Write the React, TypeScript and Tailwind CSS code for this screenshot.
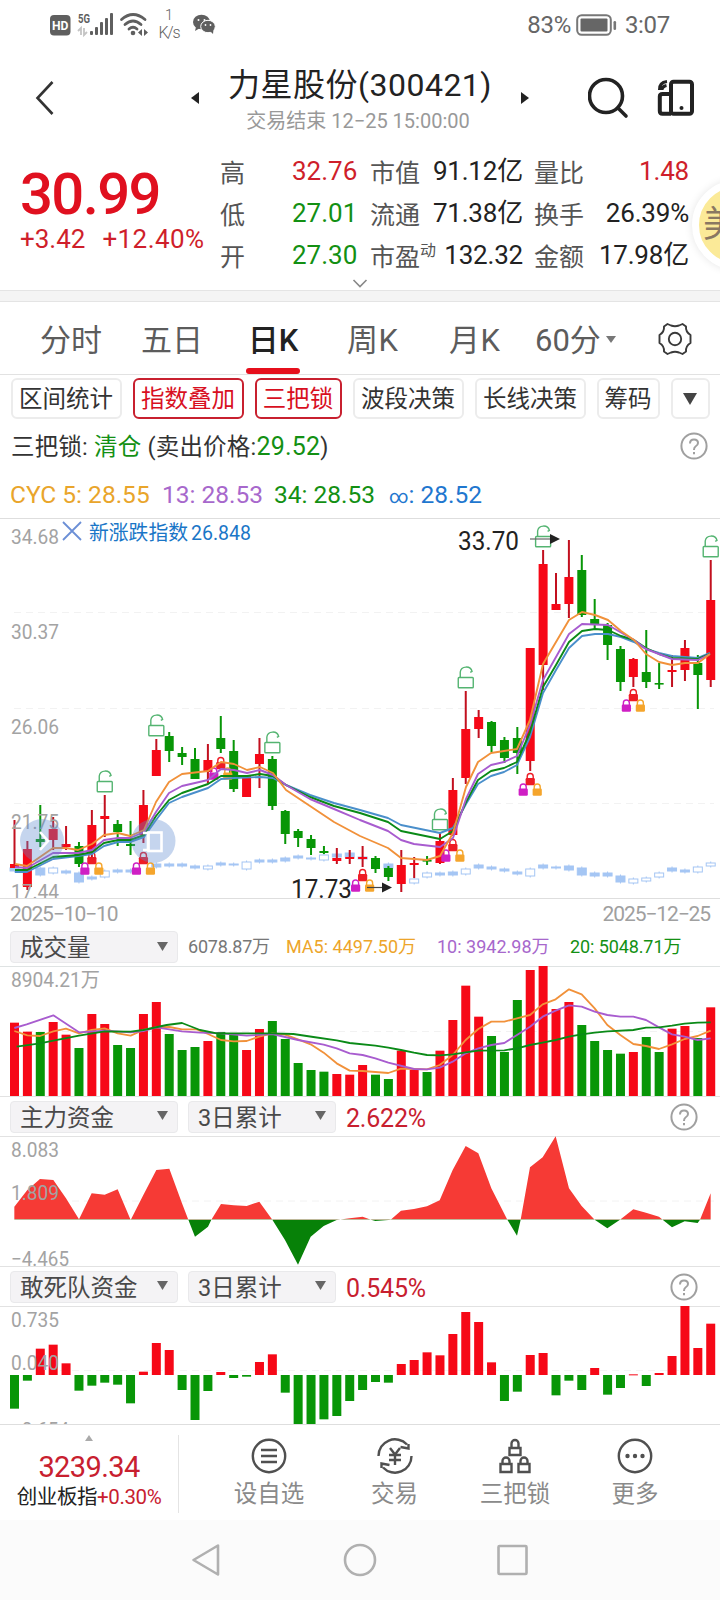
import type { ReactNode } from 'react';

const RED = '#f60817';
const GREEN = '#089607';
const STEP = 12.893;
const cx = (i: number) => 14.5 + STEP * i;

// color, wick high, wick low, body top, body bottom, volume top, retail flow edge
type Day = ['r' | 'g', number, number, number, number, number, number];

const days: Day[] = [
  ['r', 820, 868, 864, 868, 398, 866],
  ['r', 841, 890, 849, 887, 425, 782],
  ['g', 805, 847, 839, 842, 426, 686],
  ['r', 817, 850, 829, 840, 396, 674],
  ['r', 826, 850, 844, 847, 434, 730],
  ['g', 842, 867, 846, 864, 474, 812],
  ['r', 810, 858, 825, 852, 372, 797],
  ['r', 795, 837, 816, 819, 402, 788],
  ['g', 820, 846, 824, 832, 465, 794],
  ['g', 821, 855, 844, 846, 474, 850],
  ['r', 790, 843, 805, 835, 372, 755],
  ['r', 739, 776, 750, 776, 336, 669],
  ['g', 732, 762, 736, 751, 432, 690],
  ['g', 747, 765, 753, 757, 480, 810],
  ['g', 748, 779, 759, 779, 471, 900],
  ['r', 744, 783, 760, 772, 453, 813],
  ['g', 716, 753, 738, 749, 426, 756],
  ['g', 740, 792, 751, 789, 435, 774],
  ['r', 775, 797, 776, 797, 480, 770],
  ['r', 738, 788, 754, 764, 417, 726],
  ['g', 756, 810, 759, 806, 393, 703],
  ['g', 810, 844, 811, 834, 447, 818],
  ['g', 829, 847, 831, 838, 519, 912],
  ['g', 835, 855, 839, 848, 540, 912],
  ['g', 846, 854, 851, 853, 545, 898],
  ['r', 848, 864, 858, 861, 552, 888],
  ['r', 850, 864, 857, 859, 554, 843],
  ['r', 846, 867, 857, 859, 525, 810],
  ['g', 856, 873, 858, 869, 554, 786],
  ['g', 866, 881, 868, 877, 567, 788],
  ['r', 850, 892, 865, 884, 482, 732],
  ['r', 857, 878, 863, 865, 540, 720],
  ['g', 856, 865, 860, 861, 546, 697],
  ['r', 833, 864, 841, 863, 482, 706],
  ['r', 778, 836, 790, 835, 390, 642],
  ['r', 691, 784, 729, 778, 287, 576],
  ['r', 710, 738, 717, 729, 380, 606],
  ['g', 721, 752, 722, 746, 438, 727],
  ['g', 737, 763, 740, 758, 486, 843],
  ['g', 727, 774, 738, 753, 330, 815],
  ['r', 648, 771, 648, 761, 240, 705],
  ['r', 550, 690, 564, 665, 228, 699],
  ['r', 573, 610, 604, 610, 357, 826],
  ['r', 540, 618, 577, 604, 336, 782],
  ['g', 555, 617, 570, 615, 405, 810],
  ['g', 599, 629, 619, 625, 453, 744],
  ['g', 623, 660, 625, 645, 480, 824],
  ['g', 646, 691, 649, 682, 491, 804],
  ['r', 658, 687, 659, 677, 486, 763],
  ['g', 630, 688, 672, 682, 441, 798],
  ['g', 663, 689, 683, 684, 486, 759],
  ['r', 655, 687, 670, 672, 416, 708],
  ['r', 640, 681, 648, 670, 408, 558],
  ['g', 655, 709, 663, 675, 444, 684],
  ['r', 560, 687, 600, 680, 352, 611],
];

// day, top, bottom, hollow
const indexBars: [number, number, number, boolean][] = [
  [0, 868, 871, false], [2, 868, 875, false], [3, 868, 873, true], [4, 871, 873, false], [5, 873, 882, false],
  [6, 877, 879, false], [7, 871, 877, true], [8, 870, 872, false], [9, 870, 872, false], [11, 864, 867, false],
  [12, 864, 866, false], [13, 864, 866, false], [14, 866, 868, false], [15, 866, 869, true], [16, 863, 865, false],
  [17, 864, 865, false], [18, 862, 869, true], [19, 860, 862, false], [20, 860, 862, false], [21, 858, 861, false],
  [22, 856, 858, false], [23, 858, 859, false], [24, 855, 860, true], [25, 854, 857, false], [26, 853, 857, false],
  [27, 857, 859, false], [29, 864, 868, false], [31, 879, 883, true], [32, 873, 877, true], [33, 873, 875, false],
  [34, 872, 875, false], [35, 869, 874, true], [36, 865, 868, false], [37, 867, 869, false], [38, 869, 871, false],
  [39, 872, 874, false], [40, 869, 876, true], [41, 865, 868, false], [42, 867, 868, false], [43, 866, 870, false],
  [44, 868, 875, false], [45, 873, 876, false], [46, 873, 876, false], [47, 876, 882, false], [48, 879, 883, true],
  [49, 878, 881, true], [50, 873, 877, true], [51, 868, 871, false], [52, 870, 872, false], [53, 867, 872, true],
  [54, 863, 866, true],
];

const priceLines = [
  { color: '#4a8fcb', points: '15,872 27,872 53,859 78,856 92,854 104,846 118,842 130,842 144,837 156,820 169,803 182,797 208,788 221,779 234,778 260,777 273,778 286,785 310,795 334,803 360,810 388,818 401,825 440,833 453,828 466,804 478,784 491,776 504,772 517,765 530,737 543,693 556,670 569,648 582,636 595,634 608,634 621,637 634,642 646,649 659,653 672,656 698,658 710,653' },
  { color: '#0a8a17', points: '15,870 27,870 53,857 78,855 92,852 104,843 118,840 130,840 144,835 156,816 169,800 182,793 208,784 221,776 234,776 247,776 260,774 273,776 286,785 310,797 334,806 360,813 388,822 401,831 440,839 453,831 466,802 478,780 491,771 504,768 517,762 530,732 543,687 556,665 569,642 582,631 595,629 608,630 621,636 634,640 646,648 659,654 672,658 698,659 710,654' },
  { color: '#a85ccf', points: '15,867 27,868 53,853 78,853 92,850 104,840 118,838 130,838 144,832 156,812 169,793 182,786 208,780 221,769 234,770 247,773 260,770 273,775 286,785 310,799 334,809 360,820 388,831 401,840 414,844 440,847 453,838 466,799 478,774 491,765 504,762 517,756 530,725 543,680 556,657 569,634 582,624 608,625 634,640 646,649 659,654 672,659 698,660 710,654' },
  { color: '#f1913a', points: '15,864 27,866 53,848 66,848 78,850 92,844 104,835 118,833 130,836 144,830 156,802 169,782 182,774 208,771 221,762 234,764 247,770 260,767 273,773 286,790 310,806 334,822 360,836 388,848 401,858 414,859 427,860 440,856 453,833 466,787 478,762 491,753 504,751 517,749 530,720 543,664 556,642 569,620 582,612 595,615 608,620 621,631 634,640 646,654 659,662 672,665 685,663 698,663 710,654' },
];

const volumeLines = [
  { color: '#f1913a', points: '43,423 82,436 120,438 160,424 198,416 237,430 275,420 314,415 353,430 392,437 430,420 469,412 508,411 546,418 590,418 624,432 663,450 701,454 740,453 778,440 817,430 855,434 894,448 932,463 971,488 1010,520 1049,542 1088,543 1126,546 1165,549 1203,536 1242,537 1281,538 1319,525 1358,495 1397,450 1435,417 1474,395 1513,395 1551,385 1590,375 1628,343 1667,328 1707,298 1745,313 1784,355 1822,405 1861,435 1900,462 1938,468 1977,477 2016,463 2054,447 2093,438 2132,422' },
  { color: '#a85ccf', points: '43,414 80,403 160,376 237,427 314,422 392,427 430,423 469,412 546,424 600,428 663,430 740,437 817,432 894,450 971,464 1010,475 1049,490 1088,495 1126,505 1165,518 1242,537 1281,538 1319,533 1358,515 1397,490 1435,475 1474,465 1513,459 1551,435 1590,410 1628,380 1667,362 1707,346 1745,350 1784,365 1822,375 1861,380 1900,380 1938,390 1977,412 2016,433 2054,440 2093,450 2132,445' },
  { color: '#0a8a17', points: '50,470 120,460 160,452 237,437 314,424 392,425 430,420 500,405 546,399 600,420 650,430 740,430 817,430 880,432 940,441 1010,451 1049,459 1126,467 1165,473 1203,480 1242,488 1281,495 1319,496 1358,493 1397,487 1435,482 1513,481 1551,475 1590,465 1628,458 1667,450 1707,440 1745,433 1784,428 1822,424 1900,420 1938,413 1977,412 2016,407 2054,401 2093,398 2132,397' },
];

const flowArea =
  '43,298.5 43,260 82,210 120,177 160,180 198,235 237,298 275,220 314,224 353,208 392,300 430,225 469,150 508,146 546,250 565,299 585,350 624,320 634,299 663,252 701,256 740,258 778,245 817,299 855,360 894,434 932,350 971,318 1010,300 1049,295 1088,290 1113,299 1126,303 1165,300 1172,299 1203,272 1242,267 1281,259 1319,241 1358,150 1397,78 1435,100 1474,205 1522,299 1551,347 1562,299 1590,142 1628,112 1667,49 1707,205 1745,258 1784,299 1822,325 1860,299 1900,268 1938,278 1977,290 1988,299 2016,322 2054,304 2093,309 2100,299 2132,220 2132,298.5';

const fill = (c: Day[0]) => (c === 'r' ? RED : GREEN);

type LabelProps = { x: number; y: number; w: number; size?: number; color?: string; children: string };

function Label({ x, y, w, size = 20.5, color = '#a3a3a3', children }: LabelProps) {
  return (
    <text x={x} y={y} fontSize={size} fill={color} textLength={w} lengthAdjust="spacingAndGlyphs">
      {children}
    </text>
  );
}

function Padlock({ x, y, color }: { x: number; y: number; color: string }) {
  return (
    <g>
      <path d={`M${x - 3} ${y + 6}V${y + 3.5}a3 3 0 0 1 6 0V${y + 6}`} fill="none" stroke={color} strokeWidth="1.4" />
      <rect x={x - 4.6} y={y + 5} width="9.2" height="7.2" rx="1.2" fill={color} />
    </g>
  );
}

function LockTrio({ x, y }: { x: number; y: number }) {
  return (
    <g>
      <Padlock x={x} y={y} color="#ee1c25" />
      <Padlock x={x - 7} y={y + 10.5} color="#cf1fc4" />
      <Padlock x={x + 7} y={y + 10.5} color="#f5a52c" />
    </g>
  );
}

function OpenLock({ x, y }: { x: number; y: number }) {
  return (
    <g fill="none" stroke="#54b471" strokeWidth="1.4">
      <path d={`M${x - 5.5} ${y + 11.5}V${y + 6}a6 5.6 0 0 1 11.8 -0.6l-1.8 1`} />
      <rect x={x - 7.5} y={y + 11.5} width="15" height="10.3" rx="0.8" />
    </g>
  );
}

function PriceChart() {
  return (
    <svg viewBox="0 518 720 380" className="block h-[380px] w-[720px]">
      <g stroke="#f2f2f2" strokeDasharray="7 5">
        <path d="M14 612.5H714" />
        <path d="M14 708.5H714" />
        <path d="M14 803.5H714" />
      </g>
      <g fill="#a5c6f4" stroke="#a5c6f4">
        {indexBars.map(([i, top, bottom, hollow]) => (
          <g key={i}>
            <path d={`M${cx(i)} ${top - 1.5}V${bottom + 1.5}`} />
            <rect x={cx(i) - 4.5} y={top} width="9" height={bottom - top} fill={hollow ? '#fff' : '#a5c6f4'} />
          </g>
        ))}
      </g>
      {days.map(([c, hi, lo, top, bottom], i) => (
        <g key={i} fill={fill(c)}>
          <rect x={cx(i) - 1} y={hi} width="2" height={lo - hi} fill={c === 'r' ? '#c2101f' : GREEN} />
          <rect x={cx(i) - 4.5} y={top} width="9" height={Math.max(bottom - top, 1.6)} />
        </g>
      ))}
      {[[6, 852], [10, 852], [16, 757], [27, 869], [34, 839], [40, 773], [48, 689]].map(([i, y]) => (
        <LockTrio key={i} x={cx(i)} y={y} />
      ))}
      {[[7, 770], [11, 714], [20, 731], [33, 808], [35, 666], [41, 525], [54, 535]].map(([i, y]) => (
        <OpenLock key={i} x={cx(i)} y={y} />
      ))}
      {priceLines.map((l) => (
        <polyline key={l.color} points={l.points} fill="none" stroke={l.color} strokeWidth="1.9" strokeLinejoin="round" />
      ))}
      <Label x={11} y={544} w={48}>34.68</Label>
      <Label x={11} y={639} w={48}>30.37</Label>
      <Label x={11} y={734} w={48}>26.06</Label>
      <Label x={11} y={829} w={48}>21.75</Label>
      <Label x={11} y={899} w={48}>17.44</Label>
      <g fill="#5f8bd0" fillOpacity="0.36">
        <circle cx="42" cy="841" r="22" />
        <circle cx="153.500" cy="841" r="22" />
      </g>
      <g fill="none" stroke="#fff" strokeWidth="2.600">
        <path d="M40 832L48 841L40 850" />
        <path d="M143 833H148V850H143" />
        <rect x="148.500" y="832.5" width="13" height="18.5" />
      </g>
      <path d="M63 522L81 540M81 522L63 540" stroke="#6b8fd6" strokeWidth="1.8" />
      <Label x={89} y={539.5} w={99} size={20} color="#1a76c7">新涨跌指数</Label>
      <Label x={191} y={540} w={60} size={20} color="#1a76c7">26.848</Label>
      <Label x={458} y={550} w={61} size={25.5} color="#222">33.70</Label>
      <path d="M530 539H552" stroke="#666" strokeWidth="1.2" />
      <path d="M550 534L560 539L550 544Z" fill="#222" />
      <Label x={291} y={898} w={61} size={25.5} color="#222">17.73</Label>
      <path d="M367 887.5H384" stroke="#444" strokeWidth="1.2" />
      <path d="M382 882.5L392 887.5L382 892.5Z" fill="#222" />
    </svg>
  );
}

function VolumeChart() {
  return (
    <svg viewBox="0 966 720 130" className="block h-[130px] w-[720px]">
      <path d="M14 1031.5H714" stroke="#f2f2f2" strokeDasharray="7 5" />
      {days.map(([c, , , , , v], i) => (
        <rect key={i} x={cx(i) - 4.5} y={890 + v / 3} width="9" height={206 - v / 3} fill={fill(c)} />
      ))}
      <g transform="translate(0 890) scale(0.33333)">
        {volumeLines.map((l) => (
          <polyline key={l.color} points={l.points} fill="none" stroke={l.color} strokeWidth="5.500" strokeLinejoin="round" />
        ))}
      </g>
      <Label x={11} y={987} w={89}>8904.21万</Label>
    </svg>
  );
}

function MainFlowChart() {
  return (
    <svg viewBox="0 1136 720 130" className="block h-[130px] w-[720px]">
      <defs>
        <clipPath id="above">
          <rect x="0" y="0" width="2160" height="298.5" />
        </clipPath>
        <clipPath id="below">
          <rect x="0" y="298.5" width="2160" height="200" />
        </clipPath>
      </defs>
      <path d="M60 1201H714" stroke="#f2f2f2" strokeDasharray="7 5" />
      <g transform="translate(0 1120) scale(0.33333)">
        <polygon points={flowArea} fill="#f63a35" clipPath="url(#above)" />
        <polygon points={flowArea} fill="#078108" clipPath="url(#below)" />
      </g>
      <Label x={11} y={1157} w={48}>8.083</Label>
      <Label x={11} y={1200} w={48}>1.809</Label>
      <Label x={11} y={1266} w={58}>−4.465</Label>
    </svg>
  );
}

function RetailFlowChart() {
  return (
    <svg viewBox="0 1306 720 118" className="block h-[118px] w-[720px]">
      <path d="M60 1370.5H714" stroke="#f4f4f4" strokeDasharray="7 5" />
      {days.map((d, i) => {
        const v = d[6];
        const y = Math.min(v, 765) / 3 + 1120;
        return (
          <rect
            key={i}
            x={cx(i) - 4.5}
            y={y}
            width="9"
            height={Math.max(Math.abs(v - 765) / 3, 1)}
            fill={v < 765 ? RED : GREEN}
          />
        );
      })}
      <Label x={11} y={1326.5} w={48}>0.735</Label>
      <Label x={11} y={1369.5} w={48}>0.040</Label>
      <Label x={11} y={1437} w={58}>−0.654</Label>
    </svg>
  );
}

function StatusBar() {
  return (
    <div className="flex h-[50px] items-center justify-between pr-[50px] pl-[49px] text-[#666]">
      <svg viewBox="49 0 170 50" className="h-[50px] w-[170px]" fill="#5f5f5f">
        <rect x="50" y="15" width="20.5" height="20.5" rx="4" />
        <text x="52" y="30" fontSize="13" fontWeight="700" fill="#fff" textLength="16.5" lengthAdjust="spacingAndGlyphs">HD</text>
        <text x="78" y="23" fontSize="13" fontWeight="700" textLength="12" lengthAdjust="spacingAndGlyphs">5G</text>
        <path d="M81 35V28L78 31M84 28V35L87 32" fill="none" stroke="#c4c4c4" strokeWidth="1.8" />
        <rect x="90" y="31" width="3" height="4" rx="1" />
        <rect x="95" y="27" width="3" height="8" rx="1" />
        <rect x="100" y="22" width="3" height="13" rx="1" />
        <rect x="105" y="18" width="3" height="17" rx="1" />
        <rect x="110" y="13" width="3" height="22" rx="1" />
        <g fill="none" stroke="#5f5f5f" strokeWidth="2.8" strokeLinecap="round">
          <path d="M121.5 19.5Q133 9.500 145 19.500" />
          <path d="M125 24.500Q133 17.500 141 24.500" />
          <path d="M129 29Q133 25.500 137 29" />
        </g>
        <circle cx="133" cy="33" r="2.3" />
        <path d="M138 32.500L142 29V36ZM148 32.500L144 29V36Z" />
        <text x="165" y="20" fontSize="14.500" fontWeight="300">1</text>
        <text x="158.500" y="38" fontSize="16" fontWeight="300" textLength="22">K/s</text>
        <ellipse cx="201.500" cy="22" rx="8.500" ry="7.300" />
        <path d="M196 27L195 31L200 28Z" />
        <ellipse cx="208" cy="26.500" rx="7.300" ry="6.200" stroke="#fff" />
        <path d="M210 31L213 34L213.500 29Z" />
        <g fill="#fff">
          <circle cx="198.500" cy="20" r="1" />
          <circle cx="204.500" cy="20" r="1" />
          <circle cx="205.500" cy="25" r="0.9" />
          <circle cx="210.500" cy="25" r="0.9" />
        </g>
      </svg>
      <div className="flex items-center text-[24px] leading-none">
        <span className="tracking-[-0.300px]">83%</span>
        <svg viewBox="0 0 42 22" className="ml-[5px] h-[22px] w-[42px]">
          <rect x="1.200" y="1.200" width="33.600" height="19.600" rx="4.500" fill="none" stroke="#777" strokeWidth="2" />
          <rect x="4.500" y="4.500" width="27" height="13" rx="1" fill="#666" />
          <rect x="37.500" y="7" width="2.600" height="9" rx="1.300" fill="#777" />
        </svg>
        <span className="ml-[7px] tracking-[-0.3px]">3:07</span>
      </div>
    </div>
  );
}

function Header() {
  return (
    <div className="flex h-[96px] items-start text-[#222]">
      <svg viewBox="0 0 20 36" className="mt-[30px] ml-[35px] h-[36px] w-[20px]" fill="none" stroke="#333" strokeWidth="2.600">
        <path d="M17.500 2L2.500 18L17.500 34" />
      </svg>
      <svg viewBox="0 0 8 12" className="mt-[42px] ml-[136px] h-[12px] w-[8px]"><path d="M8 0V12L0 6Z" fill="#222" /></svg>
      <div className="mx-[10px] flex w-[302px] flex-col items-center">
        <div className="mt-[15px] h-[40px] text-[32px] leading-[40px] tracking-[0.500px] whitespace-nowrap">力星股份(300421)</div>
        <div className="mt-[4px] mr-[4px] h-[24px] text-[20px] leading-[24px] whitespace-nowrap text-[#999]">交易结束 12−25 15:00:00</div>
      </div>
      <svg viewBox="0 0 8 12" className="mt-[42px] h-[12px] w-[8px]"><path d="M0 0V12L8 6Z" fill="#222" /></svg>
      <svg viewBox="0 0 42 42" className="mt-[27px] ml-[59px] h-[42px] w-[42px]" fill="none" stroke="#222" strokeWidth="3.600" strokeLinecap="round">
        <circle cx="18" cy="19" r="16.500" />
        <path d="M30 31L38 39" />
      </svg>
      <svg viewBox="0 0 38 38" className="mt-[29px] ml-[27px] h-[38px] w-[38px]" fill="none" stroke="#222" strokeWidth="4" strokeLinejoin="round">
        <rect x="14" y="2.800" width="21" height="32" rx="2.500" />
        <path d="M14 15H5.500Q2.800 15 2.800 17.500V32Q2.800 34.800 5.500 34.800H14" />
        <path d="M2.500 11Q2 3.500 10 2.500M5 11Q5 7.500 9.500 6.500" strokeWidth="3" />
        <circle cx="24.500" cy="29" r="2" fill="#222" stroke="none" />
      </svg>
    </div>
  );
}

const quotes = [
  { a: '高', av: '32.76', up: true, b: '市值', bv: '91.12亿', c: '量比', cv: '1.48', cColor: 'text-[#cf1f2b]' },
  { a: '低', av: '27.01', up: false, b: '流通', bv: '71.38亿', c: '换手', cv: '26.39%', cColor: 'text-[#222]' },
  { a: '开', av: '27.30', up: false, b: '市盈', bv: '132.32', c: '金额', cv: '17.98亿', cColor: 'text-[#222]' },
];

function Quote() {
  return (
    <div className="flex h-[144px] pl-[20px]">
      <div className="w-[200px] text-[#e0101f]">
        <div className="mt-[19px] h-[58px] text-[58px] leading-[58px] font-medium tracking-[-1.600px]">30.99</div>
        <div className="mt-[1px] flex h-[30px] gap-[17px] text-[26px] leading-[30px] whitespace-nowrap text-[#cf1f2b]">
          <span>+3.42</span>
          <span className="tracking-[0.400px]">+12.40%</span>
        </div>
      </div>
      <div className="mt-[4px] flex w-[469px] flex-col items-stretch">
        {quotes.map((q) => (
          <div key={q.a} className="flex h-[42px] items-center text-[25px] leading-none whitespace-nowrap text-[#555]">
            <span className="w-[72px] pt-[4px]">{q.a}</span>
            <span className={`w-[78px] text-[26px] ${q.up ? 'text-[#cf1f2b]' : 'text-[#139013]'}`}>{q.av}</span>
            <span className="flex h-[29px] w-[61px] shrink-0 pt-[4px]">
              {q.b}
              {q.b === '市盈' && <sup className="-top-[2px] text-[16px] leading-none">动</sup>}
            </span>
            <span className="w-[92px] shrink-0 text-right text-[26px] tracking-[-0.2px] text-[#222]">{q.bv}</span>
            <span className="ml-[11px] w-[50px] pt-[4px]">{q.c}</span>
            <span className={`flex-1 text-right text-[26px] tracking-[-0.2px] ${q.cColor}`}>{q.cv}</span>
          </div>
        ))}
        <svg viewBox="0 0 16 9" className="mt-[3px] ml-[132px] h-[9px] w-[16px]" fill="none" stroke="#888" strokeWidth="1.600">
          <path d="M1.500 1L8 7.500L14.500 1" />
        </svg>
      </div>
    </div>
  );
}

function Tabs() {
  return (
    <div className="flex h-[73px] border-b border-[#e2e2e2] text-[31px] leading-[77px] whitespace-nowrap text-[#5c5c5c]">
      <span className="ml-[40px] w-[101px]">分时</span>
      <span className="w-[105px]">五日</span>
      <div className="flex w-[54px] flex-col items-center text-[#222]">
        <span className="h-[66px] font-medium">日K</span>
        <span className="h-[6px] w-[54px] rounded-[3px] bg-[#e60f1c]" />
      </div>
      <span className="ml-[47px] w-[102px] tracking-[0.500px]">周K</span>
      <span className="w-[86px] tracking-[0.500px]">月K</span>
      <span>60分</span>
      <svg viewBox="0 0 10 7" className="mt-[34px] ml-[5px] h-[7px] w-[10px]"><path d="M0 0H10L5 7Z" fill="#777" /></svg>
      <svg viewBox="-17 -17 34 34" className="mt-[20px] ml-auto mr-[28px] h-[34px] w-[34px]" fill="none" stroke="#3a3a3a" strokeWidth="1.900" strokeLinejoin="round">
        <path d="M-7.500 -15L-4 -13.500Q0 -12 4 -13.500L7.500 -15L11 -12.500Q10.500 -7 15.500 -4V4Q10.500 7 11 12.500L7.500 15L4 13.500Q0 12 -4 13.500L-7.500 15L-11 12.500Q-10.500 7 -15.500 4V-4Q-10.500 -7 -11 -12.500Z" />
        <circle r="6.200" />
      </svg>
    </div>
  );
}

const chips = [
  { text: '区间统计', width: 'w-[111px]', active: false },
  { text: '指数叠加', width: 'w-[111px]', active: true },
  { text: '三把锁', width: 'w-[87px]', active: true },
  { text: '波段决策', width: 'w-[111px]', active: false },
  { text: '长线决策', width: 'w-[111px]', active: false },
  { text: '筹码', width: 'w-[63px]', active: false },
];

function Chips() {
  return (
    <div className="flex h-[46px] items-start gap-[11px] pt-[3px] pl-[10.500px] text-[23.500px] whitespace-nowrap">
      {chips.map(({ text, width, active }) => (
        <span
          key={text}
          className={`${width} flex h-[41px] shrink-0 items-center justify-center rounded-[6px] pt-[3px] leading-none ${
            active ? 'border-2 border-[#c8202f] text-[#d8101f]' : 'border-2 border-[#ececec] text-[#333]'
          }`}
        >
          {text}
        </span>
      ))}
      <span className="flex h-[41px] w-[39px] shrink-0 items-center justify-center rounded-[6px] border-2 border-[#ececec]">
        <svg viewBox="0 0 14 12" className="h-[12px] w-[14px]"><path d="M0 0H14L7 12Z" fill="#444" /></svg>
      </span>
    </div>
  );
}

function Help({ className = '' }: { className?: string }) {
  return (
    <svg viewBox="0 0 28 28" className={`h-[28px] w-[28px] ${className}`} fill="none" stroke="#a0a0a0" strokeWidth="2">
      <circle cx="14" cy="14" r="12.600" />
      <path d="M10 11.500Q10 7.500 14 7.500Q18 7.500 18 11Q18 13 15.500 14.500Q14 15.500 14 18" />
      <path d="M14 20V22.200" />
    </svg>
  );
}

function Picker({ text, className }: { text: string; className: string }) {
  return (
    <div className={`flex h-[32px] items-center justify-between rounded-[4px] border border-[#e9e9eb] bg-[#f4f3f5] pl-[9px] text-[23.500px] leading-none whitespace-nowrap text-[#4a4a4a] ${className}`}>
      <span className="pt-[4px]">{text}</span>
      <svg viewBox="0 0 11 9" className="mb-[2px] h-[9px] w-[11px]"><path d="M0 0H11L5.500 9Z" fill="#666" /></svg>
    </div>
  );
}

function FlowHeader({ name, value }: { name: string; value: string }) {
  return (
    <div className="-mb-px flex h-[41px] items-center border-t border-b border-[#e2e2e2] pl-[10px]">
      <Picker text={name} className="w-[168px] pr-[9px]" />
      <Picker text="3日累计" className="ml-[10px] w-[148px] pr-[9px]" />
      <span className="ml-[10px] pt-[3px] text-[25px] leading-none tracking-[-0.2px] text-[#c8202f]">{value}</span>
      <Help className="mr-[22px] ml-auto" />
    </div>
  );
}

function Action({ label, className, children }: { label: string; className: string; children: ReactNode }) {
  return (
    <div className={`flex flex-col items-center pt-[11px] ${className}`}>
      <svg viewBox="-20 -20 40 40" className="h-[40px] w-[40px]" fill="none" stroke="#505050" strokeWidth="2.400">
        {children}
      </svg>
      <span className="mt-[4px] text-[23.500px] leading-[28px] whitespace-nowrap text-[#8a8a8a]">{label}</span>
    </div>
  );
}

function BottomBar() {
  return (
    <div className="flex h-[96px] border-t border-[#dedede]">
      <div className="mt-[10px] flex h-[78px] w-[179px] flex-col items-center border-r border-[#e4e4e4] whitespace-nowrap">
        <svg viewBox="0 0 8 6" className="h-[6px] w-[8px]"><path d="M0 6H8L4 0Z" fill="#aaa" /></svg>
        <span className="mt-[9px] h-[34px] text-[29px] leading-[34px] tracking-[-0.6px] text-[#c8202f]">3239.34</span>
        <span className="h-[26px] text-[20.500px] leading-[26px] tracking-[-0.400px] text-[#222]">
          创业板指<span className="text-[#c8202f]">+0.30%</span>
        </span>
      </div>
      <Action label="设自选" className="ml-[50px] w-[80px]">
        <circle r="16.200" />
        <path d="M-8 -6H8M-8 0H8M-8 6H8" />
      </Action>
      <Action label="交易" className="ml-[45.500px] w-[80px]">
        <path d="M-16.500 0A16.500 16.500 0 0 1 12 -11.500M5.500 -9L13.500 -7.500L13.500 -12" />
        <path d="M16.500 0A16.500 16.500 0 0 1 -12 11.500M-5.500 9L-13.500 7.500L-13.500 12" />
        <path d="M-5 -8L0 -1.500L5 -8M0 -1.500V9M-6 -1H6M-6 4H6" />
      </Action>
      <Action label="三把锁" className="ml-[40.500px] w-[80px]">
        <path d="M-5.500 -8H5.500V-1H-5.500ZM-3.500 -8V-12.500A3.500 3.500 0 0 1 3.500 -12.500V-8" />
        <path d="M-14.500 8H-3.500V16H-14.500ZM-12.500 8V5A3.500 3.500 0 0 1 -5.500 5V8" />
        <path d="M3.500 8H14.500V16H3.500ZM5.500 8V5A3.500 3.500 0 0 1 12.500 5V8" />
      </Action>
      <Action label="更多" className="ml-[40px] w-[80px]">
        <circle r="16.200" />
        <g fill="#505050" stroke="none">
          <circle cx="-7.500" r="2.200" />
          <circle r="2.200" />
          <circle cx="7.500" r="2.200" />
        </g>
      </Action>
    </div>
  );
}

function NavBar() {
  return (
    <div className="flex h-[80px] items-center bg-[#fbfbfb]">
      <svg viewBox="0 0 340 34" className="ml-[190px] h-[34px] w-[340px]" fill="none" stroke="#b0b0b0" strokeWidth="2.600" strokeLinejoin="round">
        <path d="M28 2.500V31.500L3.500 17Z" />
        <circle cx="170" cy="17" r="15" />
        <rect x="308.500" y="3" width="28" height="28" rx="1" />
      </svg>
    </div>
  );
}

export default function App() {
  return (
    <div className="relative h-[1600px] w-[720px] overflow-hidden bg-white font-['Roboto','Noto_Sans_CJK_SC',sans-serif]">
      <StatusBar />
      <Header />
      <Quote />
      <div className="h-[12px] border-t border-b border-[#e4e4e4] bg-[#f4f4f4]" />
      <Tabs />
      <Chips />
      <div className="flex h-[51px] items-center justify-between pr-[12px] pb-[2px] pl-[11px] text-[23.500px] leading-none text-[#333]">
        <span className="pt-[3px] tracking-[0.200px]">
          三把锁: <span className="text-[#139013]">清仓</span> (卖出价格:<span className="text-[25px] text-[#139013]">29.52</span>)
        </span>
        <Help />
      </div>
      <div className="flex h-[46px] items-center pl-[10px] text-[24.500px] leading-none whitespace-nowrap">
        <span className="w-[152px] text-[#e9a52b]">CYC 5: 28.55</span>
        <span className="w-[112px] text-[#a768cc]">13: 28.53</span>
        <span className="w-[115px] text-[#139013]">34: 28.53</span>
        <span className="text-[#1f77cf]"><span className="text-[19px]">∞</span>: 28.52</span>
      </div>
      <div className="-mb-px h-[381px] border-t border-b border-[#dedede]">
        <div className="-mt-px h-[380px]">
          <PriceChart />
        </div>
      </div>
      <div className="flex h-[30px] items-center justify-between px-[10px] pt-[2px] text-[21px] leading-none tracking-[-1.100px] text-[#a0a0a0]">
        <span>2025−10−10</span>
        <span>2025−12−25</span>
      </div>
      <div className="flex h-[39px] items-center border-b border-[#dfe3e3] pl-[10px] text-[18px] leading-none whitespace-nowrap">
        <Picker text="成交量" className="w-[168px] pr-[9px]" />
        <span className="ml-[10px] w-[98px] tracking-[-0.200px] text-[#777]">6078.87万</span>
        <span className="w-[151px] text-[#eda52a]">MA5: 4497.50万</span>
        <span className="w-[133px] text-[#a768cc]">10: 3942.98万</span>
        <span className="tracking-[-0.100px] text-[#139013]">20: 5048.71万</span>
      </div>
      <div className="-mt-px h-[130px]">
        <VolumeChart />
      </div>
      <FlowHeader name="主力资金" value="2.622%" />
      <MainFlowChart />
      <FlowHeader name="敢死队资金" value="0.545%" />
      <RetailFlowChart />
      <BottomBar />
      <NavBar />
      <div className="absolute top-[180px] left-[692px] flex h-[90px] w-[90px] items-center rounded-full border-[7px] border-white bg-[#fbea98] pl-[4px] text-[36px] leading-none text-[#8a7862] shadow-[0_0_8px_rgba(0,0,0,0.1)]">
        美
      </div>
    </div>
  );
}
